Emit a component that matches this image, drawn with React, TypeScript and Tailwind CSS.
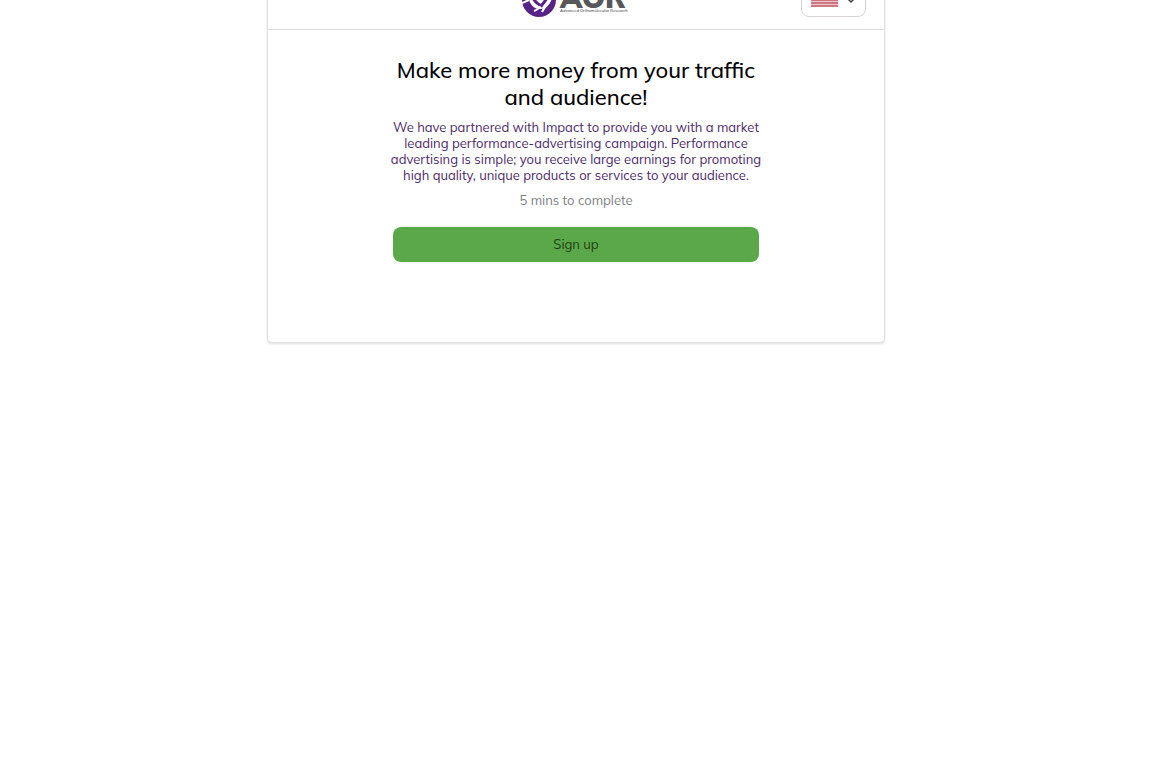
import React, { useState } from 'react';

interface Locale {
  code: string;
  label: string;
}

const locales: Locale[] = [{ code: 'en-US', label: 'English (US)' }];

const Logo: React.FC = () => (
  <svg viewBox="0 0 108 40" className="h-10 w-[108px]" role="img" aria-label="AOR">
    <circle cx="17" cy="22" r="17" fill="#572386" />
    <circle cx="18" cy="20" r="11" fill="#fff" />
    <path d="M11 20C13 24 15 26 20 28M19 29C20 25 24 24 25 19" fill="none" stroke="#572386" strokeWidth="3" />
    <path d="M29 20C28 26 23 27 20 34M18 28C17 31 15 32 12 33M0 25L7 22" fill="none" stroke="#fff" strokeWidth="2" />
    <text x="38" y="30" fontSize="29" fontWeight="900" fill="#58585a">
      AOR
    </text>
    <text x="38" y="34" fontSize="4" fontWeight="600" fill="#555">
      Advanced Orthomolecular Research
    </text>
  </svg>
);

const Flag: React.FC = () => (
  <svg viewBox="0 0 27 18" className="h-[18px] w-[27px] shrink-0" aria-hidden="true">
    <rect width="27" height="18" fill="#ecc5ca" />
    {[1, 4, 7, 10, 13, 16].map((y) => (
      <rect key={y} y={y} width="27" height="2" fill="#cf7782" />
    ))}
    <rect width="12" height="8" fill="#3c3b6e" />
  </svg>
);

const LocalePicker: React.FC = () => {
  const [locale, setLocale] = useState(locales[0].code);

  return (
    <div className="relative flex h-[38px] w-[65px] items-center rounded-lg border border-[#d9d3d5] px-[9px]">
      <Flag />
      <svg viewBox="0 0 10 12" className="ml-auto h-3 w-2.5" aria-hidden="true">
        <path d="M1 6L5 10L9 6" fill="none" stroke="#444" strokeWidth="1.5" />
      </svg>
      <select
        aria-label="Language"
        value={locale}
        onChange={(e) => setLocale(e.target.value)}
        className="absolute inset-0 cursor-pointer opacity-0"
      >
        {locales.map((item) => (
          <option key={item.code} value={item.code}>
            {item.label}
          </option>
        ))}
      </select>
    </div>
  );
};

const App: React.FC = () => {
  return (
    // The header starts tucked above the top edge of the window
    <div className="min-h-screen overflow-hidden bg-white px-4 font-['Mulish','Muli','Noto_Sans',sans-serif]">
      <main className="mx-auto -mt-[34px] max-w-[618px] rounded border border-[#e0e0e0] bg-white shadow">
        <header className="grid grid-cols-3 items-center border-b border-[#dedede] px-[18px] py-[11px]">
          <div className="col-start-2 justify-self-center">
            <Logo />
          </div>
          <div className="justify-self-end">
            <LocalePicker />
          </div>
        </header>

        <section className="mx-auto max-w-[382px] pt-[27px] pb-20 text-center">
          <h1 className="text-[22px] leading-[27px] font-medium text-black">
            Make more money from your traffic
            <br />
            and audience!
          </h1>
          <p className="mt-2 text-[13px] leading-4 text-[#4b2a6b]">
            We have partnered with Impact to provide you with a market
            <br />
            leading performance-advertising campaign. Performance
            <br />
            advertising is simple; you receive large earnings for promoting
            <br />
            high quality, unique products or services to your audience.
          </p>
          <p className="mt-2 text-[13px] leading-[18px] text-[#7d8084]">5 mins to complete</p>
          <div className="mt-[18px] px-2">
            <button
              type="button"
              className="h-[35px] w-full rounded-lg bg-[#5ba84a] text-[13px] text-[#1f4210]"
            >
              Sign up
            </button>
          </div>
        </section>
      </main>
    </div>
  );
};

export default App;
